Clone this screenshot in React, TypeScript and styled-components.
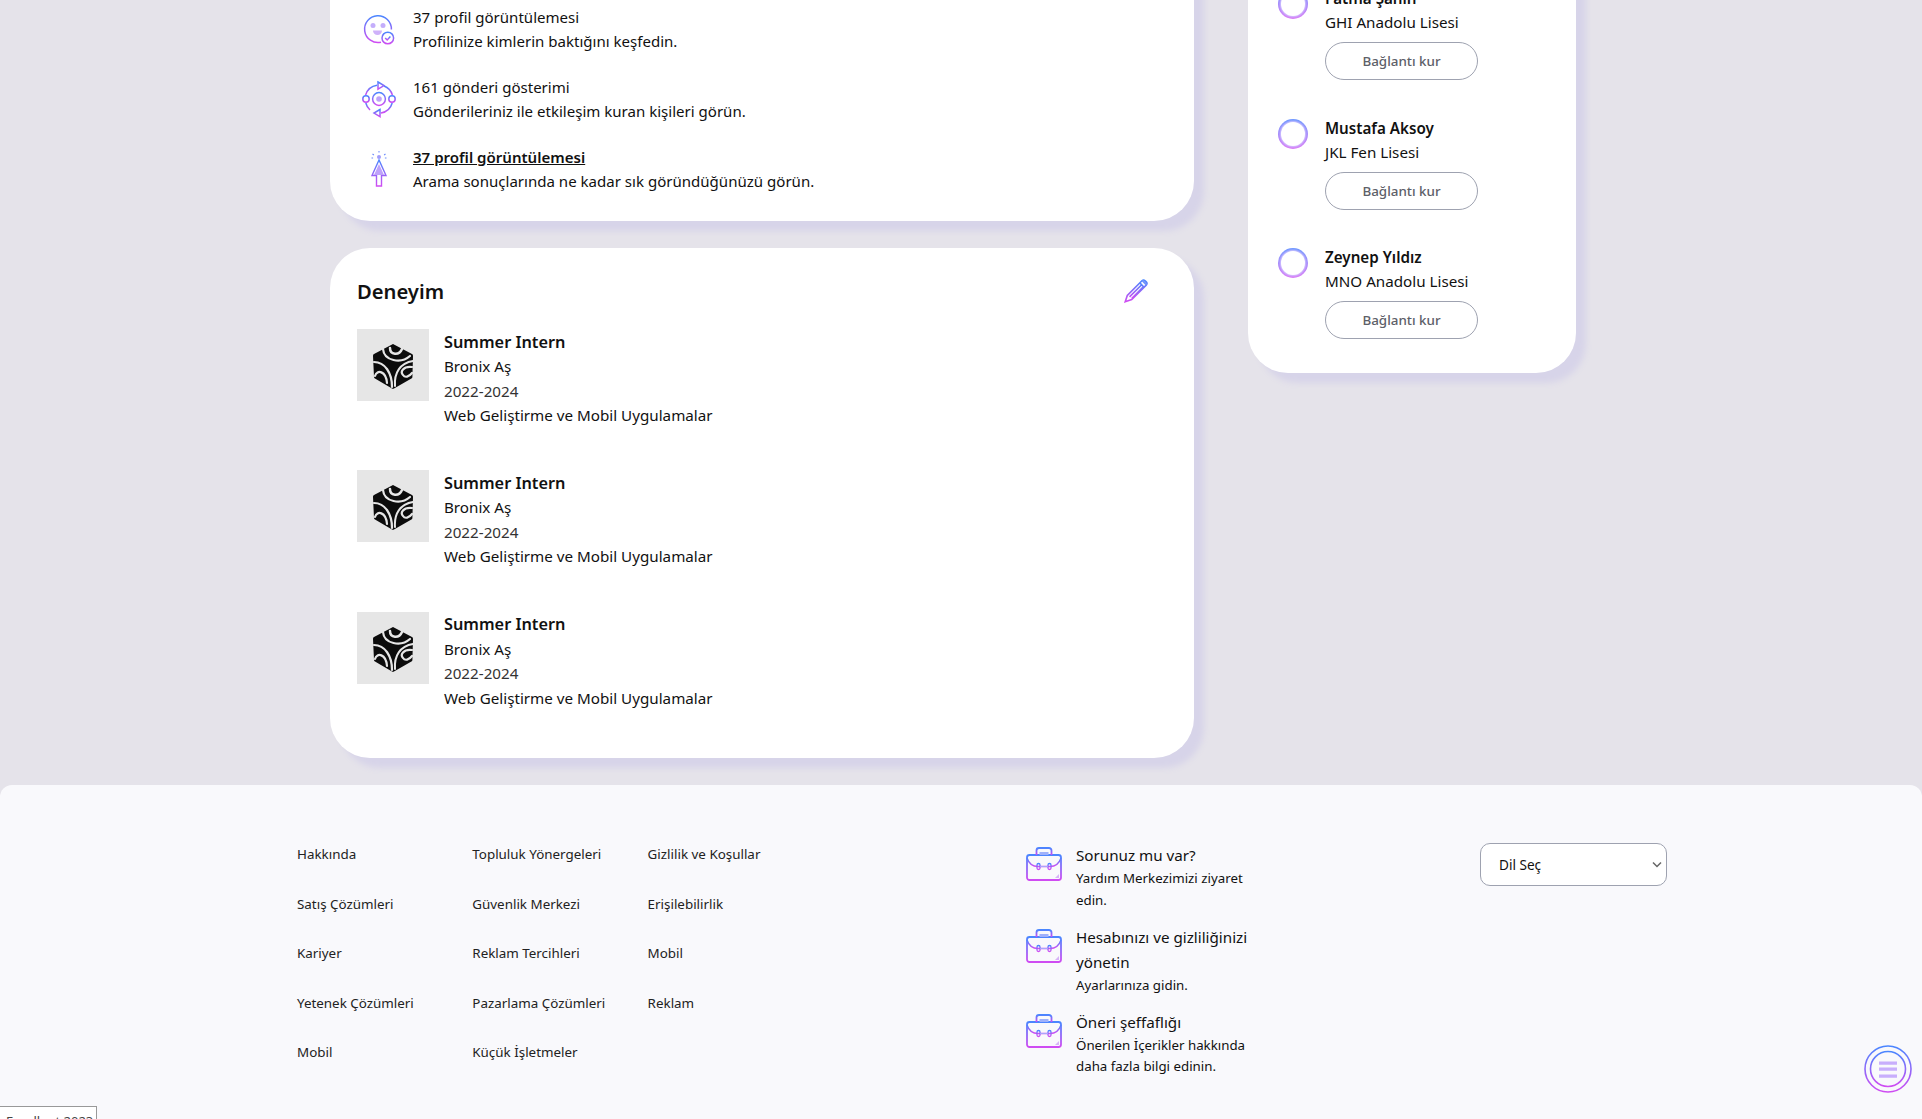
import React from "react";
import styled, { createGlobalStyle } from "styled-components";

const Global = createGlobalStyle`
    html, body {
        margin: 0;
        padding: 0;
        height: 100%;
        overflow: hidden;
        background: #e5e3ea;
        font-family: "Noto Sans", "Open Sans", sans-serif;
        color: #111;
    }
`

const Page = styled.div`
    height: 1119px;
    overflow: hidden;
`

const Content = styled.div`
    display: flex;
    align-items: flex-start;
    margin-top: -60px;
    padding-left: 330px;
`

const LeftColumn = styled.div`
    width: 864px;
    display: flex;
    flex-direction: column;
    gap: 27px;
`

const Card = styled.div`
    background: #fff;
    border-radius: 40px;
    box-shadow: 10px 10px 6px #d7d4e9;
`

const AnalyticsCard = styled(Card)`
    height: 281px;
    box-sizing: border-box;
    padding: 65px 0 0 27px;
    display: flex;
    flex-direction: column;
    gap: 22px;
`

const AnalyticsRow = styled.div`
    display: flex;
    align-items: center;
    height: 48px;
`

const AnalyticsIcon = styled.div`
    width: 44px;
    margin-right: 12px;
    display: flex;
    justify-content: center;
    svg { display: block; }
`

const AnalyticsText = styled.div`
    font-size: 15.05px;
    line-height: 24.3px;
`

const AnalyticsLink = styled.a`
    display: block;
    font-weight: 600;
    color: #111;
    text-decoration: underline;
`

const ExperienceCard = styled(Card)`
    height: 510px;
    box-sizing: border-box;
    padding: 26px 44px 0 27px;
`

const ExperienceHeader = styled.div`
    display: flex;
    justify-content: space-between;
    align-items: center;
    height: 34px;
    margin-bottom: 21px;
`

const ExperienceTitle = styled.h2`
    margin: 0;
    font-size: 20.2px;
    font-weight: 600;
`

const ExperienceItem = styled.div`
    display: flex;
    height: 141.4px;
`

const LogoTile = styled.div`
    width: 72px;
    height: 72px;
    background: #e6e6e6;
    flex-shrink: 0;
    margin-right: 15px;
`

const ExperienceInfo = styled.div`
    padding-top: 0.7px;
    font-size: 15.2px;
    line-height: 24.4px;
`

const ExperienceRole = styled.div`
    font-size: 16.3px;
    font-weight: 600;
`

const ExperienceDate = styled.div`
    color: #333;
`

const SideCard = styled(Card)`
    width: 328px;
    height: 433px;
    box-sizing: border-box;
    margin-left: 54px;
    padding: 46px 0 0 30px;
    display: flex;
    flex-direction: column;
    gap: 18.5px;
`

const Person = styled.div`
    display: flex;
    height: 111px;
`

const Ring = styled.div`
    width: 30px;
    height: 30px;
    margin-top: 3px;
    border-radius: 50%;
    box-sizing: border-box;
    padding: 3px;
    margin-right: 17px;
    flex-shrink: 0;
    background: linear-gradient(180deg, #6c97ff, #da7af6);
    &::after {
        content: "";
        display: block;
        width: 100%;
        height: 100%;
        border-radius: 50%;
        background: #fff;
        box-shadow: 0 0 2px 1px #d5c8ff;
    }
`

const PersonName = styled.div`
    font-size: 15.2px;
    font-weight: 600;
    line-height: 24px;
`

const PersonSchool = styled.div`
    font-size: 15.2px;
    line-height: 24px;
`

const ConnectButton = styled.button`
    display: block;
    width: 153px;
    height: 38px;
    margin-top: 8px;
    border: 1px solid #9ea2b0;
    border-radius: 19px;
    background: #fff;
    color: #5d6068;
    font-family: inherit;
    font-size: 13.4px;
    font-weight: 500;
`

const Footer = styled.footer`
    margin-top: 27px;
    height: 334px;
    background: #f9f9fc;
    border-radius: 12px 12px 0 0;
    display: flex;
    align-items: flex-start;
    box-sizing: border-box;
    padding: 58px 0 0 297px;
`

const LinkColumns = styled.div`
    display: grid;
    grid-template-columns: 175.3px 175.3px 175px;
    grid-auto-rows: 49.6px;
    width: 729px;
    margin-top: -1px;
`

const FooterLink = styled.a`
    font-size: 13.4px;
    line-height: 22px;
    color: #222;
`

const HelpColumn = styled.div`
    width: 250px;
    display: flex;
    flex-direction: column;
    gap: 13.5px;
    margin-right: 204px;
`

const HelpItem = styled.div`
    display: flex;
`

const HelpIcon = styled.div`
    width: 50px;
    flex-shrink: 0;
    padding-top: 4px;
    svg { display: block; }
`

const HelpTitle = styled.div`
    font-size: 15.2px;
    line-height: 25px;
`

const HelpText = styled.div`
    font-size: 13.3px;
    line-height: 21.5px;
    width: 180px;
`

const SelectWrap = styled.div`
    position: relative;
    width: 187px;
    height: 43px;
    svg {
        position: absolute;
        right: 5px;
        top: 18px;
        pointer-events: none;
    }
`

const LanguageSelect = styled.select`
    appearance: none;
    width: 100%;
    height: 100%;
    padding-left: 18px;
    border: 1px solid #9ea2b0;
    border-radius: 10px;
    background: #fff;
    font-family: inherit;
    font-size: 13.6px;
    color: #111;
`

const FloatingButton = styled.button`
    position: fixed;
    left: 1864px;
    top: 1045px;
    width: 48px;
    height: 48px;
    padding: 0;
    border: 0;
    background: none;
    svg { display: block; }
`

const CornerNote = styled.div`
    position: fixed;
    left: -1px;
    top: 1106px;
    width: 98px;
    height: 30px;
    border: 1px solid #999;
    background: #fff;
    font-size: 13px;
    line-height: 20px;
    padding: 4px 0 0 6px;
    box-sizing: border-box;
    color: #444;
    white-space: nowrap;
`

const Grad = ({ id }: { id: string }) => (
    <defs>
        <linearGradient id={id} x1="0" y1="0" x2="0" y2="1">
            <stop offset="0" stopColor="#4a86ff" />
            <stop offset="1" stopColor="#d04cf2" />
        </linearGradient>
    </defs>
)

const FaceIcon = () => (
    <svg width="32" height="33" viewBox="0 0 32 33" fill="none">
        <Grad id="faceG" />
        <g stroke="url(#faceG)" strokeWidth="1.5">
            <path d="M18 29.200A13.400 13.400 0 1 1 28.400 16.500" />
            <circle cx="24.800" cy="25" r="5.800" />
            <path d="M22.200 25l2 2 3.200-3.400" />
        </g>
        <circle cx="10" cy="12.500" r="2.500" fill="#c4aefb" />
        <circle cx="20" cy="12.500" r="2.500" fill="#c4aefb" />
        <path d="M10 17.500h9a4.500 4.500 0 0 1-9 0z" fill="#cfb2fa" />
    </svg>
)

const TargetIcon = () => (
    <svg width="34" height="40" viewBox="0 0 34 40" fill="none">
        <Grad id="targetG" />
        <g stroke="url(#targetG)" strokeWidth="1.5">
            <path d="M3.600 16A14 14 0 0 1 15 6.200" />
            <path d="M22 7A14 14 0 0 1 30.400 16" />
            <path d="M3.800 24A14 14 0 0 0 8 31" />
            <path d="M19 34A14 14 0 0 0 30.200 24" />
            <path d="M16 3l6 3.600-6 3.600z" />
            <path d="M18 30.500l-6 3.600 6 3.600z" />
            <circle cx="4" cy="20" r="3.200" />
            <circle cx="30" cy="20" r="3.200" />
            <circle cx="17" cy="20" r="6.400" />
        </g>
        <circle cx="17" cy="20" r="2.800" fill="#bfa2fa" />
    </svg>
)

const CursorIcon = () => (
    <svg width="20" height="36" viewBox="0 0 20 36" fill="none">
        <Grad id="cursorG" />
        <path d="M10 9L3 24.500h4.500V35h5V24.500H17z" stroke="url(#cursorG)" strokeWidth="1.400" />
        <path d="M10 13L5 24h10z" fill="#bfa2fa" />
        <circle cx="10" cy="6" r="2" fill="#a09bfb" />
        <path d="M10 0v1.600M3.500 3l1.400 1M16.500 3l-1.400 1M2.500 7h1.600M15.900 7h1.600" stroke="#6d8cfb" strokeWidth="1.100" />
    </svg>
)

const PencilIcon = () => (
    <svg width="28" height="28" viewBox="0 0 26 26" fill="none">
        <Grad id="pencilG" />
        <g stroke="url(#pencilG)" strokeWidth="1.500">
            <path d="M5 17L18.500 3.500a2.200 2.200 0 0 1 3 0l1 1a2.200 2.200 0 0 1 0 3L9 21l-6 2z" />
            <path d="M16.500 5.500l4 4M7 18.500L18.500 7M9 20l11-11" />
        </g>
        <path d="M18.200 3.800l1.500-1.300 3.800 3.800-1.400 1.500z" fill="#6f93fb" />
    </svg>
)

const CubeLogo = () => (
    <svg width="72" height="72" viewBox="0 0 72 72">
        <path d="M36 15L55 25a2 2 0 0 1 1 2l-.6 21a2 2 0 0 1-1 1.600L37 59.500a2 2 0 0 1-2 0L18 49.500a2 2 0 0 1-1-1.600L16 27a2 2 0 0 1 1-2z" fill="#0c0c0c" />
        <g fill="none" stroke="#e6e6e6" strokeLinecap="round">
            <path d="M26 20C27 32 44 35 53 27" strokeWidth="2.200" />
            <path d="M33 19C33 26 42 27 45 20" strokeWidth="2.500" />
            <path d="M17 33C28 33 35 44 35 58" strokeWidth="2.200" />
            <path d="M18 47C20 40 29 42 30 54" strokeWidth="2.200" />
            <path d="M38 57C37 44 43 34 56 32" strokeWidth="2" />
            <path d="M55 38C46 37 43 43 46 46C48 49 52 48 55 44" strokeWidth="2.200" />
        </g>
    </svg>
)

const BriefcaseIcon = ({ id }: { id: string }) => (
    <svg width="36" height="34" viewBox="0 0 36 34" fill="none">
        <Grad id={id} />
        <g stroke={`url(#${id})`} strokeWidth="1.800">
            <rect x="1" y="8" width="34" height="25" rx="2.500" />
            <path d="M10.500 8V3.500a2.500 2.500 0 0 1 2.500-2.500h10a2.500 2.500 0 0 1 2.500 2.500V8" />
            <path d="M1 11c2 6 6 8.500 11 8.500h12c5 0 9-2.500 11-8.500" strokeWidth="1.400" />
            <rect x="11" y="16.500" width="3" height="6" rx="1.500" strokeWidth="1.300" />
            <rect x="22" y="16.500" width="3" height="6" rx="1.500" strokeWidth="1.300" />
        </g>
        <path d="M13.500 5h9v3h-9z" fill="#9fb1fb" />
        <path d="M14 19.500h8" stroke="#a9a5fb" strokeWidth="1" />
        <path d="M33 27v4h-4z" fill="#d7b4f7" />
    </svg>
)

const MenuIcon = () => (
    <svg width="48" height="48" viewBox="0 0 48 48" fill="none">
        <Grad id="menuG" />
        <circle cx="24" cy="24" r="23" stroke="url(#menuG)" strokeWidth="1.600" />
        <circle cx="24" cy="24" r="17.500" stroke="url(#menuG)" strokeWidth="1.600" />
        <path d="M15 16.500h18v3.200H15zM15 22.500h18v3.200H15zM15 29.500h18v3.200H15z" fill="#c8aefc" />
    </svg>
)

const analytics = [
    { icon: <FaceIcon />, title: "37 profil görüntülemesi", text: "Profilinize kimlerin baktığını keşfedin.", link: false },
    { icon: <TargetIcon />, title: "161 gönderi gösterimi", text: "Gönderileriniz ile etkileşim kuran kişileri görün.", link: false },
    { icon: <CursorIcon />, title: "37 profil görüntülemesi", text: "Arama sonuçlarında ne kadar sık göründüğünüzü görün.", link: true },
]

const people = [
    { name: "Fatma Şahin", school: "GHI Anadolu Lisesi" },
    { name: "Mustafa Aksoy", school: "JKL Fen Lisesi" },
    { name: "Zeynep Yıldız", school: "MNO Anadolu Lisesi" },
]

const footerLinks = [
    "Hakkında", "Topluluk Yönergeleri", "Gizlilik ve Koşullar",
    "Satış Çözümleri", "Güvenlik Merkezi", "Erişilebilirlik",
    "Kariyer", "Reklam Tercihleri", "Mobil",
    "Yetenek Çözümleri", "Pazarlama Çözümleri", "Reklam",
    "Mobil", "Küçük İşletmeler",
]

const help = [
    { title: "Sorunuz mu var?", text: "Yardım Merkezimizi ziyaret edin." },
    { title: "Hesabınızı ve gizliliğinizi yönetin", text: "Ayarlarınıza gidin." },
    { title: "Öneri şeffaflığı", text: "Önerilen İçerikler hakkında daha fazla bilgi edinin." },
]

export default function App() {
    return (
        <Page>
            <Global />
            <Content>
                <LeftColumn>
                    <AnalyticsCard>
                        {analytics.map((row, i) => (
                            <AnalyticsRow key={i}>
                                <AnalyticsIcon>{row.icon}</AnalyticsIcon>
                                <AnalyticsText>
                                    {row.link ? <AnalyticsLink>{row.title}</AnalyticsLink> : <div>{row.title}</div>}
                                    <div>{row.text}</div>
                                </AnalyticsText>
                            </AnalyticsRow>
                        ))}
                    </AnalyticsCard>
                    <ExperienceCard>
                        <ExperienceHeader>
                            <ExperienceTitle>Deneyim</ExperienceTitle>
                            <PencilIcon />
                        </ExperienceHeader>
                        {[0, 1, 2].map((i) => (
                            <ExperienceItem key={i}>
                                <LogoTile><CubeLogo /></LogoTile>
                                <ExperienceInfo>
                                    <ExperienceRole>Summer Intern</ExperienceRole>
                                    <div>Bronix Aş</div>
                                    <ExperienceDate>2022-2024</ExperienceDate>
                                    <div>Web Geliştirme ve Mobil Uygulamalar</div>
                                </ExperienceInfo>
                            </ExperienceItem>
                        ))}
                    </ExperienceCard>
                </LeftColumn>
                <SideCard>
                    {people.map((p) => (
                        <Person key={p.name}>
                            <Ring />
                            <div>
                                <PersonName>{p.name}</PersonName>
                                <PersonSchool>{p.school}</PersonSchool>
                                <ConnectButton>Bağlantı kur</ConnectButton>
                            </div>
                        </Person>
                    ))}
                </SideCard>
            </Content>
            <Footer>
                <LinkColumns>
                    {footerLinks.map((l, i) => <div key={i}><FooterLink>{l}</FooterLink></div>)}
                </LinkColumns>
                <HelpColumn>
                    {help.map((h, i) => (
                        <HelpItem key={i}>
                            <HelpIcon><BriefcaseIcon id={`caseG${i}`} /></HelpIcon>
                            <div>
                                <HelpTitle>{h.title}</HelpTitle>
                                <HelpText>{h.text}</HelpText>
                            </div>
                        </HelpItem>
                    ))}
                </HelpColumn>
                <SelectWrap>
                    <LanguageSelect defaultValue="">
                        <option value="">Dil Seç</option>
                    </LanguageSelect>
                    <svg width="10" height="7" viewBox="0 0 10 7" fill="none">
                        <path d="M1 1.500l4 4 4-4" stroke="#666" strokeWidth="1.500" />
                    </svg>
                </SelectWrap>
            </Footer>
            <FloatingButton><MenuIcon /></FloatingButton>
            <CornerNote>Excellent 2023</CornerNote>
        </Page>
    )
}
